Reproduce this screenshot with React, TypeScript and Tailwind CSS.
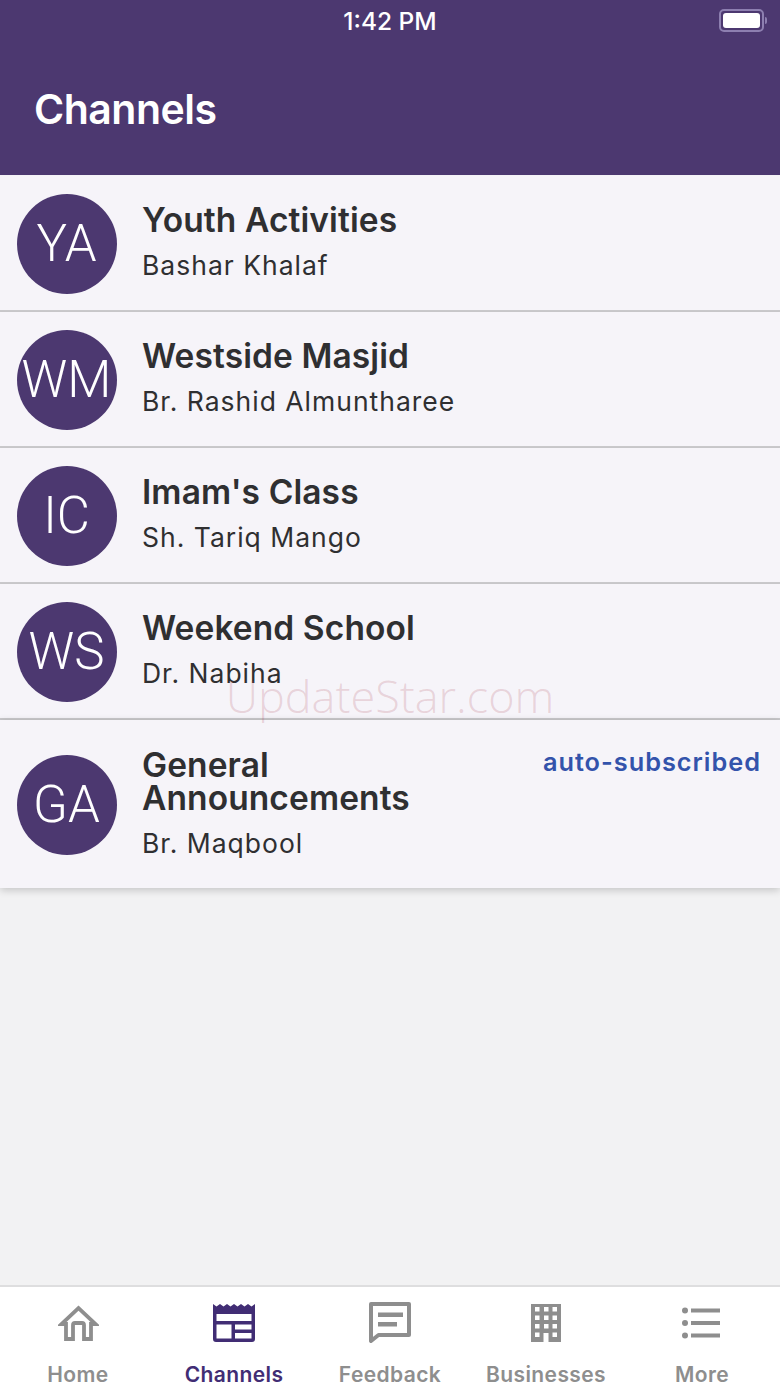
const rows = [
  { i: "WM0", a: "YA", t: "Youth Activities", s: "Bashar Khalaf" },
  { i: "WM1", a: "WM", t: "Westside Masjid", s: "Br. Rashid Almuntharee" },
  { i: "WM2", a: "IC", t: "Imam's Class", s: "Sh. Tariq Mango" },
  { i: "WM3", a: "WS", t: "Weekend School", s: "Dr. Nabiha" },
];

function Avatar({ text }: { text: string }) {
  return (
    <div className="w-[100px] h-[100px] shrink-0 rounded-full bg-[#4c3870] flex items-center justify-center pt-[2px] pr-[1px] text-white text-[51px] font-light font-['Roboto',sans-serif]">
      {text}
    </div>
  );
}

function HomeIcon() {
  return (
    <svg width="41" height="36" viewBox="0 0 41 36" fill="none" stroke="#8e8e8e" strokeWidth="3.800">
      <path d="M8 34V19H3.500L20.500 3l17 16H33v15h-7V20a2 2 0 0 0-2-2h-7a2 2 0 0 0-2 2v14z" />
    </svg>
  );
}

function ChannelsIcon() {
  return (
    <svg width="42" height="38" viewBox="0 0 42 38">
      <path d="M0 0l3.500 2.500L7 0l3.500 2.500L14 0l3.500 2.500L21 0l3.500 2.500L28 0l3.500 2.500L35 0l3.500 2.500L42 0v35a3 3 0 0 1-3 3H3a3 3 0 0 1-3-3z" fill="#412d74" />
      <rect x="3.500" y="10" width="35" height="7" fill="#fff" />
      <rect x="3.500" y="20.500" width="15" height="14" fill="#fff" />
      <rect x="22" y="20.500" width="16.500" height="5" fill="#fff" />
      <rect x="22" y="29" width="16.500" height="5.500" fill="#fff" />
    </svg>
  );
}

function FeedbackIcon() {
  return (
    <svg width="42" height="42" viewBox="0 0 42 42" fill="none">
      <path d="M2 2h38v31H9.500L2 39z" stroke="#8e8e8e" strokeWidth="4" strokeLinejoin="round" />
      <rect x="9" y="10.500" width="25" height="4.500" fill="#8e8e8e" />
      <rect x="9" y="20" width="19" height="4.500" fill="#8e8e8e" />
    </svg>
  );
}

function BusinessIcon() {
  const cells: [number, number][] = [];
  for (const y of [3, 11.5, 20]) for (const x of [4, 13, 21.5]) cells.push([x, y]);
  return (
    <svg width="30" height="38" viewBox="0 0 30 38">
      <rect width="30" height="38" fill="#8e8e8e" />
      {cells.map(([x, y]) => (
        <rect key={`${x}-${y}`} x={x} y={y} width="4.500" height="4.500" fill="#fff" />
      ))}
      <rect x="4" y="28.500" width="4.500" height="4.500" fill="#fff" />
      <rect x="21.500" y="28.500" width="4.500" height="4.500" fill="#fff" />
      <rect x="12.500" y="29" width="5" height="9" fill="#fff" />
    </svg>
  );
}

function MoreIcon() {
  return (
    <svg className="-ml-[3px]" width="38" height="32" viewBox="0 0 38 32" fill="#8e8e8e">
      <circle cx="3" cy="3.500" r="3" />
      <circle cx="3" cy="16" r="3" />
      <circle cx="3" cy="28.500" r="3" />
      <rect x="9" y="1.500" width="29" height="4" />
      <rect x="9" y="14" width="29" height="4" />
      <rect x="9" y="26.500" width="29" height="4" />
    </svg>
  );
}

const tabs = [
  { l: "Home", c: "text-[#8e8e8e]", icon: <HomeIcon /> },
  { l: "Channels", c: "text-[#412d74]", icon: <ChannelsIcon /> },
  { l: "Feedback", c: "text-[#8e8e8e]", icon: <FeedbackIcon /> },
  { l: "Businesses", c: "text-[#8e8e8e]", icon: <BusinessIcon /> },
  { l: "More", c: "text-[#8e8e8e]", icon: <MoreIcon /> },
];

export default function App() {
  return (
    <div className="relative w-[780px] h-[1387px] flex flex-col bg-[#f2f2f3] overflow-hidden font-['Inter',sans-serif]">
      <header className="h-[175px] shrink-0 bg-[#4c3870] text-white relative">
        <div className="h-[42px] flex items-center justify-center text-[24.5px] pt-[1px] font-medium">1:42 PM</div>
        <div className="absolute right-[13px] top-[9px] flex items-center gap-[1px]">
          <div className="w-[45px] h-[23px] rounded-[5px] border-2 border-[#8d7fb0] p-[2px]">
            <div className="w-full h-full bg-white rounded-[3px]" />
          </div>
          <div className="w-[2px] h-[7px] bg-[#8d7fb0] rounded-r" />
        </div>
        <h1 className="pl-[34px] pt-[40px] text-[41px] leading-[54px] font-semibold tracking-[-0.5px]">Channels</h1>
      </header>

      <main className="shrink-0 pt-[1px] bg-[#f6f4f9]">
        {rows.map((r) => (
          <div key={r.i} className="h-[136px] bg-[#f6f4f9] flex items-center pl-[17px] pr-[19px] gap-[25px] border-b-[2px] border-[#c9c8cb] pt-[1px] shadow-[0_1px_2px_rgba(0,0,0,0.12)]">
            <Avatar text={r.a} />
            <div className="text-[#2f2f31] -mt-[2px]">
              <div className="text-[33.5px] leading-[36px] font-semibold tracking-[0.1px]">{r.t}</div>
              <div className="mt-[9px] text-[26.5px] leading-[36px] tracking-[1px] font-normal">{r.s}</div>
            </div>
          </div>
        ))}
        <div className="h-[168px] bg-[#f6f4f9] flex items-center pl-[17px] pr-[19px] gap-[25px] pt-[1px] shadow-[0_2px_8px_rgba(0,0,0,0.2)]">
          <Avatar text="GA" />
          <div className="text-[#2f2f31] flex-1">
            <div className="flex justify-between items-start">
              <div className="text-[33.5px] leading-[33px] font-semibold tracking-[0.1px] w-[300px]">General Announcements</div>
              <div className="text-[25.3px] leading-[32px] font-semibold tracking-[1px] text-[#3353ab] -mt-[3px]">auto-subscribed</div>
            </div>
            <div className="mt-[10px] text-[26.5px] leading-[36px] tracking-[1px]">Br. Maqbool</div>
          </div>
        </div>
      </main>

      <div className="flex-1" />

      <nav className="h-[102px] shrink-0 bg-white border-t-[2px] border-[#dededf] grid grid-cols-5">
        {tabs.map((t) => (
          <div key={t.l} className={`flex flex-col items-center ${t.c}`}>
            <div className="h-[62px] flex items-center justify-center pt-[10px]">{t.icon}</div>
            <div className="mt-[13px] text-[21px] leading-[26px] font-semibold tracking-[0.4px]">{t.l}</div>
          </div>
        ))}
      </nav>

      <div className="absolute left-0 right-0 top-[666px] text-center text-[45px] leading-[60px] font-light text-[#b04a5a]/20 pointer-events-none font-['Open_Sans',sans-serif]">
        UpdateStar.com
      </div>
    </div>
  );
}
